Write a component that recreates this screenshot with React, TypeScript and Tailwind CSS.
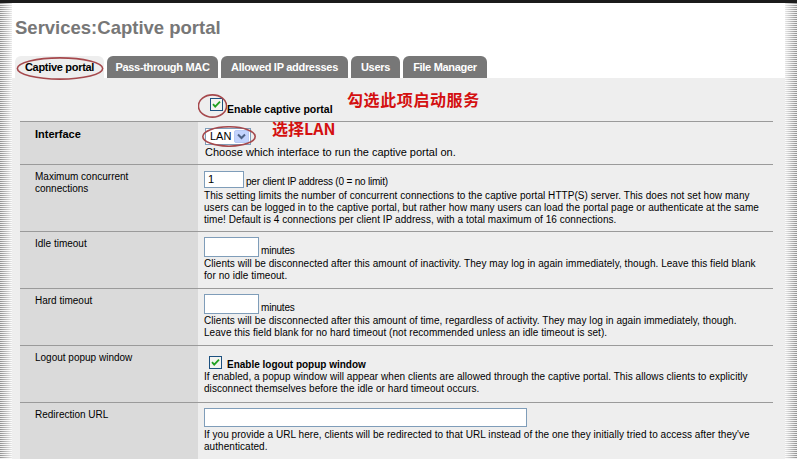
import React from "react";

const Ellipse = ({ className }: { className: string }) => (
  <svg className={`absolute pointer-events-none ${className}`} viewBox="0 0 100 40" preserveAspectRatio="none">
    <ellipse cx="50" cy="20" rx="48.5" ry="18.5" fill="none" stroke="#a5484c" strokeWidth="1.6" vectorEffect="non-scaling-stroke" />
  </svg>
);

const CheckBox = () => (
  <svg width="13" height="13" viewBox="0 0 13 13" className="shrink-0">
    <rect x="0.5" y="0.5" width="12" height="12" fill="#f4f4f0" stroke="#1c5180" />
    <path d="M3 6.2 L5.2 8.6 L10 3.6" fill="none" stroke="#21a121" strokeWidth="1.8" />
  </svg>
);

const Select = () => (
  <div className="flex items-center justify-between w-[46px] h-[17px] bg-white border border-[#7f9db9] pl-[4px] pr-[1px] text-[11px] leading-none">
    <span>LAN</span>
    <span className="flex items-center justify-center w-[15px] h-[13px] rounded-[2px] bg-[#c3d3fd] border border-[#b7c9f4]">
      <svg width="9" height="7" viewBox="0 0 9 7">
        <path d="M1 1.5 L4.5 5 L8 1.5" fill="none" stroke="#4d6185" strokeWidth="2" />
      </svg>
    </span>
  </div>
);

const Desc = ({ lines }: { lines: string[] }) => (
  <div className="text-[10px] leading-[12px] tracking-[0.05px] whitespace-nowrap">
    {lines.map((l, i) => (
      <div key={i}>{l}</div>
    ))}
  </div>
);

const Row = ({ label, bold, children }: { label: React.ReactNode; bold?: boolean; children: React.ReactNode }) => (
  <div className="flex border-t border-[#9a9a9a]">
    <div className={`w-[178px] shrink-0 bg-[#dadada] pl-[15px] pt-[6px] leading-[12px] ${bold ? "text-[11px] font-bold" : "text-[10px]"}`}>
      {label}
    </div>
    <div className="flex-1">{children}</div>
  </div>
);

const tabs = [
  { name: "Pass-through MAC", w: "w-[111px]" },
  { name: "Allowed IP addresses", w: "w-[127px]" },
  { name: "Users", w: "w-[49px]" },
  { name: "File Manager", w: "w-[84px]" },
];

export default function App() {
  return (
    <div className="relative w-[797px] h-[459px] overflow-hidden bg-white text-black font-['Liberation_Sans',Arial,sans-serif]">
      <div className="h-[3px] bg-[#1b1b1b]" />
      <div className="flex h-[456px]">
        <div className="w-[12px] shrink-0 bg-[linear-gradient(to_right,rgba(255,255,255,0),rgba(255,255,255,0.8)),repeating-linear-gradient(to_bottom,#8f8f8f_0px,#8f8f8f_1px,#eeeeee_1px,#eeeeee_2px)]" />
        <div className="flex-1 flex flex-col">
          <div className="h-[54px] pl-[3px] pt-[14px]">
            <h1 className="text-[18.5px] leading-[22px] font-bold text-[#777777]">Services:Captive portal</h1>
          </div>
          <div className="flex items-end gap-[3px] h-[22px] pl-[3px]">
            <div className="w-[89px] h-[22px] rounded-t-[6px] bg-[#eeeeee] flex items-center justify-center text-[11px] font-bold tracking-[-0.3px] text-black">
              Captive portal
            </div>
            {tabs.map((t) => (
              <div
                key={t.name}
                className={`${t.w} h-[22px] rounded-t-[6px] bg-[#777777] flex items-center justify-center text-[11px] font-bold tracking-[-0.3px] text-white`}
              >
                {t.name}
              </div>
            ))}
          </div>
          <div className="flex-1 bg-[#eeeeee] pl-[8px] pr-[12px]">
            <div className="flex h-[43px]">
              <div className="w-[178px] shrink-0" />
              <div className="flex items-end gap-[4px] pl-[12px] pt-[20px] pb-[6px]">
                <div className="mb-[4px]">
                  <CheckBox />
                </div>
                <span className="text-[10.5px] leading-[12px] font-bold">Enable captive portal</span>
              </div>
            </div>

            <Row label="Interface" bold>
              <div className="pl-[7px] pt-[6px] pb-[6px]">
                <Select />
                <div className="mt-[1px] text-[11px] leading-[12px]">Choose which interface to run the captive portal on.</div>
              </div>
            </Row>

            <Row label={<>Maximum concurrent<br />connections</>}>
              <div className="pl-[6px] pt-[6px] pb-[5px]">
                <div className="flex items-end gap-[2px]">
                  <div className="w-[40px] h-[17px] bg-white border border-[#7f9db9] pl-[3px] text-[11px] leading-[15px]">1</div>
                  <span className="text-[10px] leading-[12px] tracking-[-0.2px]">per client IP address (0 = no limit)</span>
                </div>
                <div className="mt-[2px]">
                  <Desc
                    lines={[
                      "This setting limits the number of concurrent connections to the captive portal HTTP(S) server. This does not set how many",
                      "users can be logged in to the captive portal, but rather how many users can load the portal page or authenticate at the same",
                      "time! Default is 4 connections per client IP address, with a total maximum of 16 connections.",
                    ]}
                  />
                </div>
              </div>
            </Row>

            <Row label="Idle timeout">
              <div className="pl-[6px] pt-[5px] pb-[6px]">
                <div className="flex items-end gap-[2px]">
                  <div className="w-[55px] h-[20px] bg-white border border-[#7f9db9]" />
                  <span className="text-[10px] leading-[12px] tracking-[-0.2px]">minutes</span>
                </div>
                <div className="mt-[1px]">
                  <Desc
                    lines={[
                      "Clients will be disconnected after this amount of inactivity. They may log in again immediately, though. Leave this field blank",
                      "for no idle timeout.",
                    ]}
                  />
                </div>
              </div>
            </Row>

            <Row label="Hard timeout">
              <div className="pl-[6px] pt-[5px] pb-[6px]">
                <div className="flex items-end gap-[2px]">
                  <div className="w-[55px] h-[20px] bg-white border border-[#7f9db9]" />
                  <span className="text-[10px] leading-[12px] tracking-[-0.2px]">minutes</span>
                </div>
                <div className="mt-[1px]">
                  <Desc
                    lines={[
                      "Clients will be disconnected after this amount of time, regardless of activity. They may log in again immediately, though.",
                      "Leave this field blank for no hard timeout (not recommended unless an idle timeout is set).",
                    ]}
                  />
                </div>
              </div>
            </Row>

            <Row label="Logout popup window">
              <div className="pl-[11px] pt-[10px] pb-[7px]">
                <div className="flex items-end gap-[5px]">
                  <div className="mb-[2px]">
                    <CheckBox />
                  </div>
                  <span className="text-[10px] leading-[12px] font-bold">Enable logout popup window</span>
                </div>
                <div className="-ml-[5px]">
                  <Desc
                    lines={[
                      "If enabled, a popup window will appear when clients are allowed through the captive portal. This allows clients to explicitly",
                      "disconnect themselves before the idle or hard timeout occurs.",
                    ]}
                  />
                </div>
              </div>
            </Row>

            <Row label="Redirection URL">
              <div className="pl-[6px] pt-[5px] pb-[6px]">
                <div className="w-[323px] h-[19px] bg-white border border-[#7f9db9]" />
                <div className="mt-[2px]">
                  <Desc
                    lines={[
                      "If you provide a URL here, clients will be redirected to that URL instead of the one they initially tried to access after they've",
                      "authenticated.",
                    ]}
                  />
                </div>
              </div>
            </Row>
          </div>
        </div>
        <div className="w-[12px] shrink-0 bg-[linear-gradient(to_right,rgba(255,255,255,0.8),rgba(255,255,255,0)),repeating-linear-gradient(to_bottom,#8f8f8f_0px,#8f8f8f_1px,#eeeeee_1px,#eeeeee_2px)]" />
      </div>

      <Ellipse className="left-[16px] top-[57px] w-[88px] h-[23px]" />
      <Ellipse className="left-[198px] top-[94px] w-[29px] h-[24px]" />
      <Ellipse className="left-[202px] top-[126px] w-[54px] h-[21px]" />
      <div className="absolute left-[347px] top-[90px] text-[16px] leading-[18px] font-bold tracking-[0.6px] text-[#d41010] font-['Noto_Sans_CJK_SC',sans-serif]">
        勾选此项启动服务
      </div>
      <div className="absolute left-[272px] top-[120px] text-[16px] leading-[17px] font-bold text-[#d41010] font-['Noto_Sans_CJK_SC',sans-serif]">
        选择LAN
      </div>
    </div>
  );
}
